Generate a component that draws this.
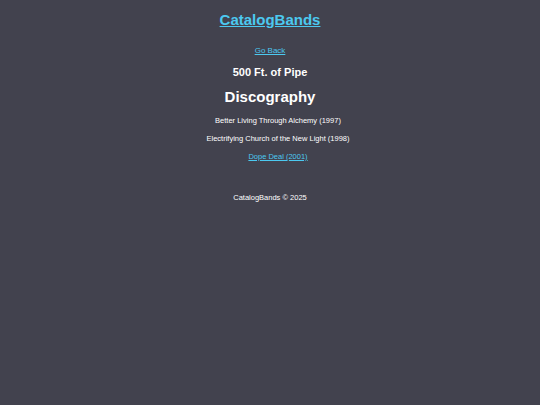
export default function App() {
  return (
    <div className="min-h-[405px] bg-[#42424e] text-white text-center" style={{ fontFamily: '"Liberation Sans", Arial, sans-serif' }}>
      <header className="pt-[8px]">
        <a href="#" className="text-[15px] font-bold leading-[18px] text-[#4cc9f0] underline">CatalogBands</a>
      </header>
      <main className="pt-[14px]">
        <a href="#" className="block text-[8px] leading-[10px] text-[#4cc9f0] underline">Go Back</a>
        <h2 className="mt-[9px] text-[11px] font-bold leading-[14px]">500 Ft. of Pipe</h2>
        <h1 className="mt-[9px] text-[15px] font-bold leading-[18px]">Discography</h1>
        <ul className="mt-[6px] pl-[16px] text-[7.5px] leading-[10px]">
          <li className="py-[4px]">Better Living Through Alchemy (1997)</li>
          <li className="py-[4px]">Electrifying Church of the New Light (1998)</li>
          <li className="py-[4px]"><a href="#" className="text-[#4cc9f0] underline">Dope Deal (2001)</a></li>
        </ul>
      </main>
      <footer className="mt-[27px] text-[7.5px] leading-[10px]">CatalogBands © 2025</footer>
    </div>
  );
}
